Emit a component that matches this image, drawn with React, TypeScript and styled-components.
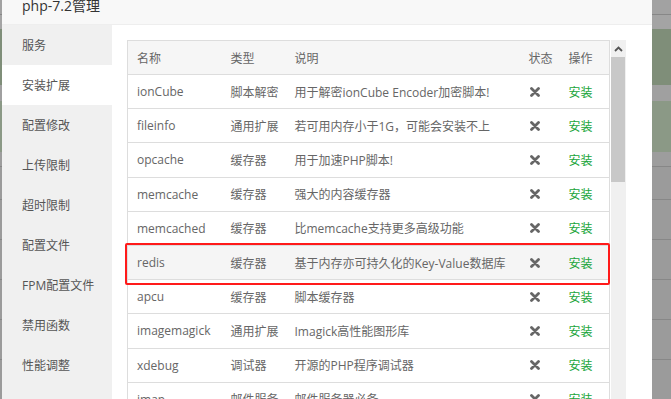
import styled, { createGlobalStyle } from 'styled-components';

type Ext = {
  name: string;
  type: string;
  desc: string;
  hover?: boolean;
};

const menu = [
  '服务',
  '安装扩展',
  '配置修改',
  '上传限制',
  '超时限制',
  '配置文件',
  'FPM配置文件',
  '禁用函数',
  '性能调整',
];

const exts: Ext[] = [
  { name: 'ionCube', type: '脚本解密', desc: '用于解密ionCube Encoder加密脚本!' },
  { name: 'fileinfo', type: '通用扩展', desc: '若可用内存小于1G，可能会安装不上' },
  { name: 'opcache', type: '缓存器', desc: '用于加速PHP脚本!' },
  { name: 'memcache', type: '缓存器', desc: '强大的内容缓存器' },
  { name: 'memcached', type: '缓存器', desc: '比memcache支持更多高级功能' },
  { name: 'redis', type: '缓存器', desc: '基于内存亦可持久化的Key-Value数据库', hover: true },
  { name: 'apcu', type: '缓存器', desc: '脚本缓存器' },
  { name: 'imagemagick', type: '通用扩展', desc: 'Imagick高性能图形库' },
  { name: 'xdebug', type: '调试器', desc: '开源的PHP程序调试器' },
  { name: 'imap', type: '邮件服务', desc: '邮件服务器必备' },
];

const GlobalStyle = createGlobalStyle`
  html, body {
    margin: 0;
    padding: 0;
    overflow: hidden;
  }
  body {
    font-family: "Open Sans", "Noto Sans CJK SC", sans-serif;
  }
`;

function Backdrop({ width }: { width: number }) {
  return (
    <Shade $width={width}>
      <ShadeBand $h={15} $c="#a2a2a2" />
      <ShadeLine />
      <ShadeBand $h={15} $c="#a4a4a4" />
      <ShadeBand $h={59} $c="#7f8e79" />
      <ShadeBand $h={16} $c="#a0a0a0" />
      <ShadeBand $h={54} $c="#8b9986" />
      <ShadeBand $h={15} $c="#9d9d9d" />
      {[33, 40, 40, 40, 40, 40].map((h, i) => (
        <div key={i}>
          <ShadeLine />
          <ShadeBand $h={h - 1} $c="#9b9b9b" />
        </div>
      ))}
    </Shade>
  );
}

function CloseMark() {
  return (
    <svg width="10" height="10" viewBox="0 0 10 10">
      <path
        d="M1.5 1.5 L8.5 8.5 M8.5 1.5 L1.5 8.5"
        stroke="#666"
        strokeWidth="2.8"
        strokeLinecap="round"
      />
    </svg>
  );
}

export default function App() {
  return (
    <>
      <GlobalStyle />
      <Page>
        <Backdrop width={2} />
        <Dialog>
          <TitleBar>php-7.2管理</TitleBar>
          <Body>
            <Sidebar>
              {menu.map((m) => (
                <MenuItem key={m} $active={m === '安装扩展'}>
                  {m}
                </MenuItem>
              ))}
            </Sidebar>
            <Content>
              <TableWrap>
                <Table>
                  <colgroup>
                    <col style={{ width: 94 }} />
                    <col style={{ width: 64 }} />
                    <col style={{ width: 234 }} />
                    <col style={{ width: 40 }} />
                    <col style={{ width: 50 }} />
                  </colgroup>
                  <thead>
                    <tr>
                      <Th>名称</Th>
                      <Th>类型</Th>
                      <Th>说明</Th>
                      <Th>状态</Th>
                      <Th>操作</Th>
                    </tr>
                  </thead>
                  <tbody>
                    {exts.map((e) => (
                      <Row key={e.name} $hover={e.hover}>
                        <Td>{e.name}</Td>
                        <Td>{e.type}</Td>
                        <Td>{e.desc}</Td>
                        <StatusTd>
                          <CloseMark />
                        </StatusTd>
                        <Td>
                          <InstallLink>安装</InstallLink>
                        </Td>
                      </Row>
                    ))}
                  </tbody>
                </Table>
                <Highlight />
              </TableWrap>
              <Scrollbar>
                <ScrollArrow>
                  <svg width="9" height="6" viewBox="0 0 9 6">
                    <path d="M1 5 L4.5 1.5 L8 5" stroke="#555" strokeWidth="1.8" fill="none" />
                  </svg>
                </ScrollArrow>
                <ScrollThumb />
              </Scrollbar>
            </Content>
          </Body>
        </Dialog>
        <Backdrop width={19} />
      </Page>
    </>
  );
}

const Page = styled.div`
  display: flex;
  width: 671px;
  height: 399px;
  overflow: hidden;
  background: #9b9b9b;
`;

const Shade = styled.div<{ $width: number }>`
  display: flex;
  flex-direction: column;
  width: ${(p) => p.$width}px;
  flex-shrink: 0;
  background: #9b9b9b;
`;

const ShadeBand = styled.div<{ $h: number; $c: string }>`
  height: ${(p) => p.$h}px;
  background: ${(p) => p.$c};
`;

const ShadeLine = styled.div`
  height: 1px;
  background: #878787;
`;

const Dialog = styled.div`
  display: flex;
  flex-direction: column;
  width: 650px;
  flex-shrink: 0;
  background: #fff;
`;

const TitleBar = styled.div`
  height: 36px;
  margin-top: -18px;
  padding: 6px 0 0 20px;
  line-height: 36px;
  font-size: 14px;
  color: #333;
  background: #f8f8f8;
  border-bottom: 1px solid #eee;
  flex-shrink: 0;
`;

const Body = styled.div`
  display: flex;
  flex: 1;
  min-height: 0;
`;

const Sidebar = styled.div`
  width: 110px;
  flex-shrink: 0;
  background: #f0f0f0;
`;

const MenuItem = styled.div<{ $active?: boolean }>`
  height: 40px;
  line-height: 41px;
  padding-left: 20px;
  font-size: 12px;
  color: #555;
  background: ${(p) => (p.$active ? '#fff' : 'transparent')};
`;

const Content = styled.div`
  display: flex;
  flex: 1;
  padding: 15px 0 0 15px;
  gap: 2px;
`;

const TableWrap = styled.div`
  position: relative;
  width: 482px;
`;

const Table = styled.table`
  width: 482px;
  border-collapse: collapse;
  table-layout: fixed;
  border: 1px solid #ddd;
  font-size: 12px;
  color: #666;
`;

const Th = styled.th`
  height: 33px;
  padding: 0 0 0 9px;
  text-align: left;
  font-weight: normal;
  white-space: nowrap;
  background: #f6f6f6;
  border-bottom: 1px solid #ddd;
`;

const Row = styled.tr<{ $hover?: boolean }>`
  background: ${(p) => (p.$hover ? '#f5f5f5' : '#fff')};
`;

const Td = styled.td`
  height: 33.2px;
  padding: 0 0 0 9px;
  white-space: nowrap;
  border-bottom: 1px solid #ddd;
`;

const StatusTd = styled(Td)`
  padding-left: 10px;
  line-height: 0;
`;

const InstallLink = styled.span`
  color: #20a53a;
  cursor: pointer;
`;

const Highlight = styled.div`
  position: absolute;
  left: -2px;
  top: 203px;
  width: 481px;
  height: 38px;
  border: 2px solid #ff1a1a;
  border-radius: 2px;
  pointer-events: none;
`;

const Scrollbar = styled.div`
  display: flex;
  flex-direction: column;
  width: 15px;
  background: #f0f0f0;
`;

const ScrollArrow = styled.div`
  display: flex;
  align-items: center;
  justify-content: center;
  height: 17px;
`;

const ScrollThumb = styled.div`
  height: 125px;
  margin-right: 1px;
  background: #c8c8c8;
`;
